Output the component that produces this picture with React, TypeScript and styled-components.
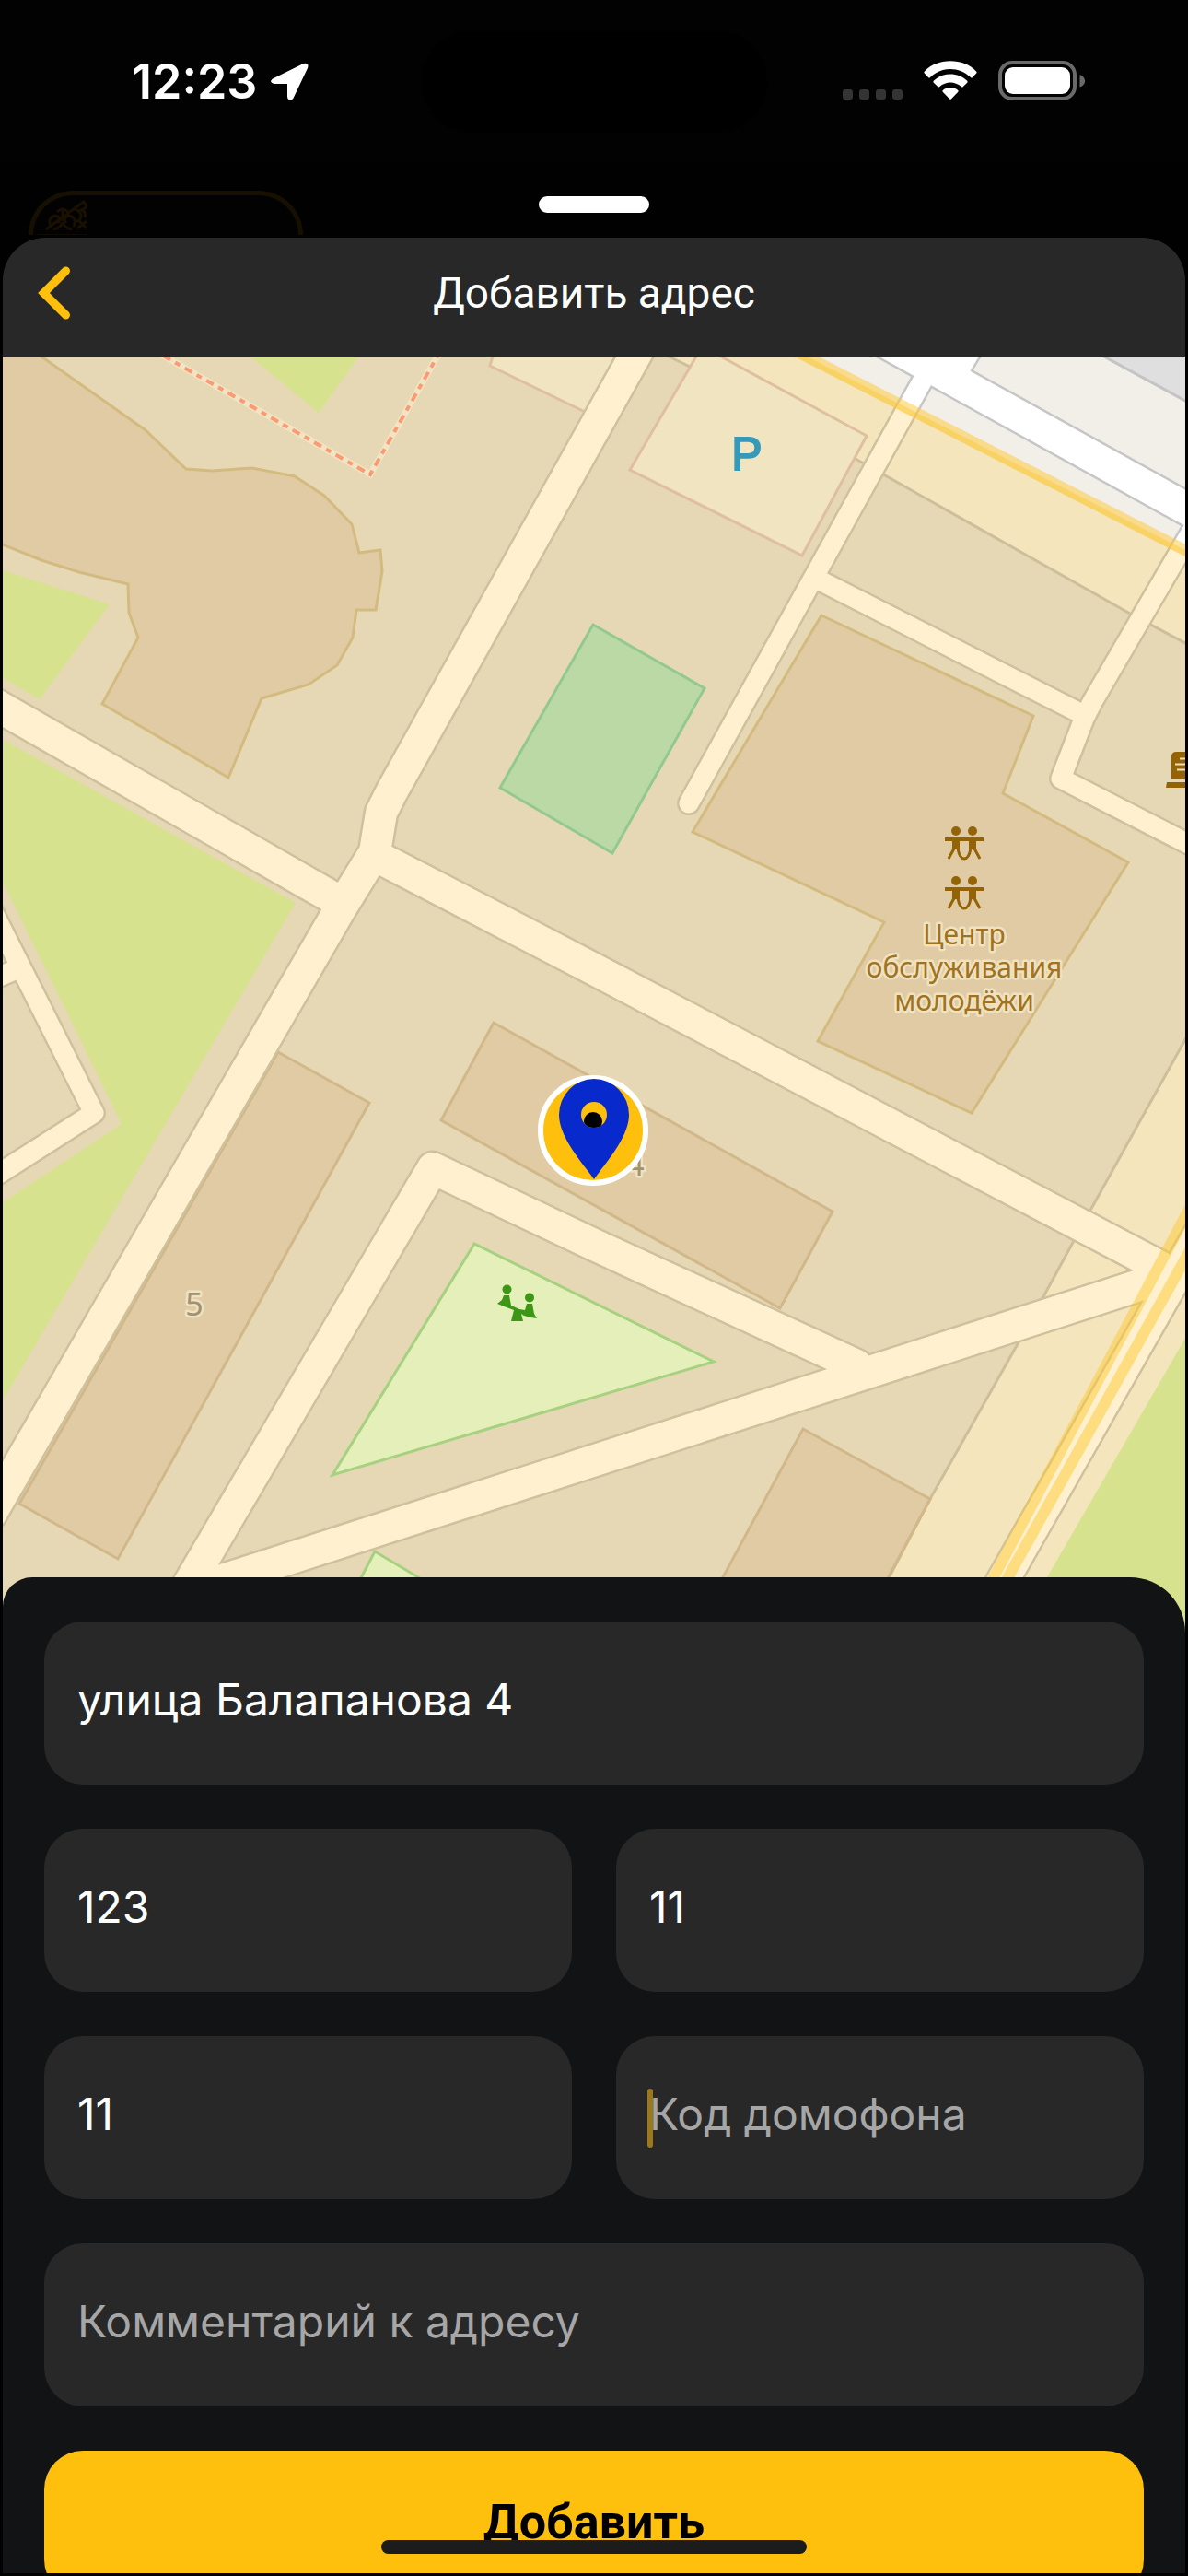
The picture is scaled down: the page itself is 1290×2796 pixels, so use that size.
import React from "react";
import styled, { createGlobalStyle } from "styled-components";

const color = {
  screen: "#020202",
  backdrop: "#000100",
  surface: "#282828",
  panel: "#121315",
  accent: "#ffbf0d",
  text: "#ffffff",
  hint: "#a6a6a6",
};

const uiFont = `Inter, "Noto Sans", sans-serif`;
const titleFont = `Roboto, "Noto Sans", sans-serif`;

const GlobalStyle = createGlobalStyle`
  * { box-sizing: border-box; }
  body { margin: 0; background: #000; }
`;

const Screen = styled.div`
  position: relative;
  display: flex;
  flex-direction: column;
  height: 100vh;
  overflow: hidden;
  background: ${color.backdrop};
  color: ${color.text};
  font-family: ${uiFont};
`;

const StatusBar = styled.header`
  display: grid;
  grid-template-columns: 1fr 376px 1fr;
  align-items: center;
  flex: none;
  height: 177px;
  background: ${color.screen};
`;

const Clock = styled.div`
  display: flex;
  align-items: center;
  gap: 13px;
  padding-left: 143px;
  font-size: 52px;
  line-height: 64px;
  font-weight: 600;
`;

const Island = styled.div`
  height: 111px;
  border-radius: 56px;
  background: #000;
`;

const Indicators = styled.div`
  display: flex;
  align-items: center;
  justify-content: flex-end;
  gap: 23px;
  padding-right: 111px;
  padding-bottom: 2px;

  svg { display: block; }
`;

const Behind = styled.div`
  display: grid;
  grid-template-columns: 1fr auto 1fr;
  align-items: start;
  flex: none;
  height: 81px;
  padding-top: 30px;
`;

const GhostCard = styled.div`
  width: 298px;
  height: 48px;
  margin-left: 31px;
  overflow: hidden;
  border: 5px solid #171002;
  border-bottom: 0;
  border-radius: 56px 56px 0 0;
  background: #020202;
`;

const Handle = styled.div`
  width: 120px;
  height: 18px;
  margin-top: 6px;
  border-radius: 9px;
  background: #fff;
`;

const Sheet = styled.main`
  display: flex;
  flex-direction: column;
  flex: 1;
  min-height: 0;
  margin: 0 3px 3px;
  overflow: hidden;
  border-radius: 46px 46px 0 0;
  background: ${color.surface};
`;

const TitleBar = styled.div`
  display: grid;
  grid-template-columns: 96px 1fr 96px;
  align-items: center;
  flex: none;
  height: 129px;
  padding-bottom: 10px;
`;

const BackButton = styled.button`
  display: flex;
  padding: 0 0 0 36px;
  border: 0;
  background: none;
  cursor: pointer;
`;

const Title = styled.h1`
  margin: 0;
  text-align: center;
  font: 400 46px/60px ${titleFont};
`;

const MapView = styled.div`
  flex: none;
  width: 100%;
  aspect-ratio: 1284 / 1385;

  svg { display: block; width: 100%; height: 100%; }
`;

const Panel = styled.form`
  position: relative;
  display: grid;
  grid-template-columns: 1fr 1fr;
  align-content: start;
  gap: 48px;
  flex: 1;
  min-height: 0;
  margin-top: -60px;
  padding: 48px 45px 0;
  overflow: hidden;
  border-radius: 32px 60px 0 0;
  background: ${color.panel};
`;

const Field = styled.label<{ $wide?: boolean }>`
  position: relative;
  display: block;
  grid-column: ${(p) => (p.$wide ? "1 / -1" : "auto")};
`;

const Input = styled.input`
  display: block;
  width: 100%;
  height: 177px;
  padding: 0 36px 8px;
  border: 0;
  outline: 0;
  border-radius: 42px;
  background: ${color.surface};
  color: ${color.text};
  font: 400 48px/60px ${uiFont};

  &::placeholder { color: ${color.hint}; opacity: 1; }
`;

const Caret = styled.span`
  position: absolute;
  top: 57px;
  left: 34px;
  width: 6px;
  height: 64px;
  border-radius: 3px;
  background: #9d781b;
`;

const Submit = styled.button`
  grid-column: 1 / -1;
  height: 160px;
  padding: 0 0 4px;
  border: 0;
  border-radius: 42px;
  background: ${color.accent};
  color: #000;
  font: 700 52px/60px ${titleFont};
  cursor: pointer;
`;

const HomeIndicator = styled.div`
  position: absolute;
  bottom: 24px;
  left: 50%;
  width: 462px;
  height: 15px;
  margin-left: -231px;
  border-radius: 8px;
  background: #1c1c1c;
`;

const LocationArrow = () => (
  <svg width="44" height="44" viewBox="293 66 44 44" aria-hidden="true">
    <path
      d="M297 84.500 L330.500 68 Q337 66.500 335 73 L319.500 105.500 Q317 109.500 314.500 107 Q313 106 313 103.500 V90 H298.500 Q292.500 88 297 84.500 Z"
      fill="#fff"
    />
  </svg>
);

const SignalDots = () => (
  <svg width="65" height="43" viewBox="916 65 65 43" aria-hidden="true" fill="#343434">
    {[916, 934, 952, 970].map((x) => (
      <rect key={x} x={x} y="96" width="11" height="11" rx="3" />
    ))}
  </svg>
);

const Wifi = () => (
  <svg width="58" height="43" viewBox="1003.500 65 58 43" aria-hidden="true" fill="#fff">
    <path d="M1004.300 78.500 Q1003.300 77.500 1004.500 76.400 C1018 61.500 1047 61.500 1060.500 76.400 Q1061.700 77.500 1060.700 78.500 L1056.500 83 Q1055.500 84 1054.400 83 C1042 71 1023 71 1010.600 83 Q1009.500 84 1008.500 83 Z" />
    <path d="M1014.300 88.700 Q1013.400 87.700 1014.500 86.600 C1024 77 1041 77 1050.500 86.600 Q1051.600 87.700 1050.700 88.700 L1046.300 93 Q1045.300 94 1044.200 93 C1037.500 87 1027.500 87 1020.800 93 Q1019.700 94 1018.700 93 Z" />
    <path d="M1024.200 98.800 Q1023.300 97.800 1024.500 96.800 C1029 93 1036 93 1040.500 96.800 Q1041.700 97.800 1040.800 98.800 L1033.500 106.300 Q1032.500 107.300 1031.500 106.300 Z" />
  </svg>
);

const Battery = () => (
  <svg width="95" height="43" viewBox="1084 65 95 43" aria-hidden="true">
    <rect x="1086" y="67" width="81" height="39" rx="13" fill="none" stroke="#6a6a6a" strokeWidth="4" />
    <rect x="1091" y="72" width="71" height="29" rx="9" fill="#fff" />
    <path d="M1172.500 80 C1180 83 1180 91 1172.500 93.500 Z" fill="#6a6a6a" />
  </svg>
);

const Ornament = () => (
  <svg width="64" height="48" viewBox="36 212 64 48" aria-hidden="true" fill="none" stroke="#1a1002" strokeWidth="3">
    <path d="M50 249 L92 218 M55 246 q-4 -10 5 -12 q8 2 3 8 M80 246 q4 -10 -5 -12 q-8 2 -3 8 M58 249 q9 -2 10 -8 q1 6 10 8 M68 240 V228 M62 230 q6 -6 12 0 M92 220 q4 6 -4 8 q6 2 4 8 M80 226 q8 4 8 8 q0 6 -6 6 M84 248 L94 240 M86 240 L94 248 M40 256 H95" />
  </svg>
);

const BackChevron = () => (
  <svg width="40" height="60" viewBox="39 289 40 60" aria-hidden="true">
    <path d="M71.500 295 L47.500 319 L71.500 343" fill="none" stroke={color.accent} strokeWidth="9" strokeLinecap="round" />
  </svg>
);

const mainRoads = [
  "M700 367 L425 860 L414 882 L407 925 L369 987 L-10 1643",
  "M-10 762 L366 977",
  "M408 929 L645 1052 L1275 1383",
  "M190 1745 L470 1268 L645 1351 L930 1482",
  "M220 1722 L1262 1387",
  "M1070 1749 L1310 1326",
];

const lanes = [
  "M1010 398 L748 872",
  "M892 631 L1171 773",
  "M1310 549 L1186 762 L1177 780 L1152 845 L1310 926",
  "M-20 965 L102 1208 L-20 1286",
  "M-10 1064 L18 1052",
];

const outerRoads = ["M930 354 L1310 564", "M1028 412 L1058 362"];

const Couple = ({ y }: { y: number }) => (
  <g fill="#946306" stroke="#946306">
    <path d={`M1026 ${y + 14} H1068`} strokeWidth="4" />
    {[1038, 1056].map((x) => (
      <g key={x}>
        <circle cx={x} cy={y + 5} r="5" stroke="none" />
        <path d={`M${x - 4} ${y + 14} H${x + 4} V${y + 25} H${x - 4} Z`} stroke="none" />
      </g>
    ))}
    <path
      d={`M1036 ${y + 24} L1030 ${y + 35} M1040 ${y + 24} Q1042 ${y + 35} 1047 ${y + 35} Q1052 ${y + 35} 1054 ${y + 24} M1058 ${y + 24} L1064 ${y + 35}`}
      fill="none"
      strokeWidth="3"
    />
  </g>
);

const halo = {
  stroke: "#efe2c1",
  strokeWidth: 5,
  strokeLinejoin: "round" as const,
  paintOrder: "stroke",
};

const CityMap = () => (
  <svg viewBox="3 387 1284 1385" preserveAspectRatio="xMidYMin slice" role="img" aria-label="Карта">
    <defs>
      <clipPath id="outside">
        <path d="M876 387 L1290 599 V380 H862 Z" />
      </clipPath>
      <clipPath id="pinHole">
        <circle cx="645" cy="1210" r="14" />
      </clipPath>
    </defs>

    <rect x="0" y="380" width="1300" height="1400" fill="#e6d8b4" />

    {/* lighter zones along the boundary */}
    <g fill="#f4e5bc" stroke="#cdbf9b" strokeWidth="3">
      <path d="M712 380 L749 398 L938 503 L1227 666 L1300 705 V380 Z" />
      <path d="M1300 1105 L1186 1310 L1106 1457 L1011 1625 L930 1780 H1300 Z" />
    </g>

    {/* lawns */}
    <g fill="#d6e28e">
      <path d="M266 382 H393 L346 448 Z" />
      <path d="M0 618 L119 656 L43 759 L0 734 Z" />
      <path d="M0 801 L321 980 L0 1525 V1307 L132 1220 L0 951 Z" />
      <path d="M1300 1430 L1137 1712 L1098 1780 H1300 Z" />
    </g>
    <g fill="#e4efb9" stroke="#a6d180" strokeWidth="3">
      <path d="M515 1350 L361 1601 L775 1478 Z" />
      <path d="M407 1684 L375 1745 L510 1745 Z" />
    </g>
    <path d="M644 678 L543 855 L665 926 L765 747 Z" fill="#bbd9a5" stroke="#93c98f" strokeWidth="3" />

    {/* parking lots */}
    <g fill="#f1e4c0" stroke="#dfbf9f" strokeWidth="3">
      <path d="M537 380 L532 397 L635 447 L700 380 Z" />
      <path d="M760 380 L684 510 L871 603 L941 473 L770 380 Z" />
    </g>

    {/* footway */}
    <path d="M172 383 L402 515 L477 383" fill="none" stroke="#f0e4c3" strokeWidth="7" />
    <path d="M172 383 L402 515 L477 383" fill="none" stroke="#fb9a74" strokeWidth="4" strokeDasharray="9 6 6 6" strokeDashoffset="-6" />

    {/* buildings */}
    <g fill="#e0cba4" stroke="#d3bb80" strokeWidth="3">
      <path d="M0 350 L45 387 L158 467 L202 509 L230 511 L274 508 L320 517 L352 538 L382 569 L390 600 L413 597 L415 620 L408 662 L387 662 L383 692 L366 722 L335 743 L284 758 L248 844 L111 764 L150 692 L140 665 L139 634 L86 621 L45 608 L0 590 Z" />
      <path d="M892 668 L1122 777 L1089 861 L1225 936 L1055 1208 L888 1130 L960 1001 L752 903 Z" />
    </g>
    <g fill="#e0cba4" stroke="#d1b88a" strokeWidth="3">
      <path d="M536 1110 L479 1216 L847 1420 L904 1315 Z" />
      <path d="M302 1142 L401 1197 L128 1692 L21 1632 Z" />
      <path d="M872 1551 L1010 1627 L940 1758 H760 Z" />
    </g>

    {/* roads: casings first, then surfaces, so that junctions stay open */}
    <g fill="none" stroke="#cfc19e" strokeLinecap="round" strokeLinejoin="round">
      {mainRoads.map((d) => <path key={d} d={d} strokeWidth="39" />)}
      {lanes.map((d) => <path key={d} d={d} strokeWidth="26" />)}
    </g>
    <g fill="none" stroke="#fff1cf" strokeLinecap="round" strokeLinejoin="round">
      {mainRoads.map((d) => <path key={d} d={d} strokeWidth="34" />)}
      {lanes.map((d) => <path key={d} d={d} strokeWidth="21" />)}
    </g>

    {/* quarter beyond the boundary */}
    <g clipPath="url(#outside)">
      <rect x="850" y="380" width="450" height="230" fill="#f2efe9" />
      <path d="M1186 380 L1300 442 V370 Z" fill="#dfdfdf" stroke="#c4c4c4" strokeWidth="3" />
      <g fill="none" stroke="#c6c6c6">
        {outerRoads.map((d) => <path key={d} d={d} strokeWidth="39" />)}
        <path d={lanes[0]} strokeWidth="26" />
        <path d={lanes[2]} strokeWidth="26" />
      </g>
      <g fill="none" stroke="#fff">
        {outerRoads.map((d) => <path key={d} d={d} strokeWidth="34" />)}
        <path d={lanes[0]} strokeWidth="21" />
        <path d={lanes[2]} strokeWidth="21" />
      </g>
    </g>

    {/* boundary lines */}
    <g fill="none" stroke="#fdc731" strokeOpacity="0.500">
      <path d="M862 380 L1300 604" strokeWidth="12" />
      <path d="M858 381 L1300 607" strokeWidth="6" strokeOpacity="0.250" />
      <path d="M1064 1740 L1310 1277" strokeWidth="12" />
      <path d="M1079 1740 L1310 1325" strokeWidth="12" />
    </g>

    {/* points of interest */}
    <text x="811" y="510" textAnchor="middle" fontFamily="Liberation Sans, sans-serif" fontSize="50" fill="#359ab8" stroke="#359ab8" strokeWidth="2">P</text>
    <Couple y={897} />
    <Couple y={951} />
    <g fontFamily="Noto Sans, sans-serif" fontSize="30" textAnchor="middle" fill="#a1721f" {...halo}>
      <text x="1047" y="1025">Центр</text>
      <text x="1047" y="1061">обслуживания</text>
      <text x="1047" y="1097">молодёжи</text>
    </g>
    <g fontFamily="Noto Sans, sans-serif" fontSize="34" textAnchor="middle" fill="#a39271" {...halo}>
      <text x="211" y="1428">5</text>
      <text x="690" y="1276">4</text>
    </g>
    <g fill="#3c9714">
      <circle cx="550.500" cy="1399.500" r="5" />
      <circle cx="575" cy="1408.500" r="5" />
      <path d="M547 1406 H553 L555 1417 L564 1421 L570 1422 L572 1415 H578 L580 1426 L583 1431 L576 1430 L569 1428 L566 1426 L568 1434 H555 L558 1422 L550 1419 L540 1415 L545 1411 Z" />
    </g>
    <g fill="#946306">
      <path d="M1272 846 V820 Q1273 816 1277 816 H1290 V846 Z" />
      <path d="M1267 849 H1290 V855 H1266 Z" />
      <path d="M1281 823.500 H1290 M1276 829.500 H1290 M1278 835.500 H1290" stroke="#f0e0bd" strokeWidth="2" />
    </g>

    {/* selected address */}
    <circle cx="644" cy="1227" r="57" fill={color.accent} stroke="#fff" strokeWidth="6" />
    <path d="M645 1280 C634 1264 607 1235 607 1210 A38 39 0 0 1 683 1210 C683 1235 656 1264 645 1280 Z" fill="#0829cb" />
    <circle cx="645" cy="1210" r="14" fill={color.accent} />
    <circle cx="644" cy="1217" r="10" fill="#000" clipPath="url(#pinHole)" />
  </svg>
);

interface FieldSpec {
  name: string;
  label: string;
  value?: string;
  wide?: boolean;
  active?: boolean;
}

const fields: FieldSpec[] = [
  { name: "street", label: "Адрес", value: "улица Балапанова 4", wide: true },
  { name: "flat", label: "Квартира", value: "123" },
  { name: "entrance", label: "Подъезд", value: "11" },
  { name: "floor", label: "Этаж", value: "11" },
  { name: "intercom", label: "Код домофона", active: true },
  { name: "comment", label: "Комментарий к адресу", wide: true },
];

export default function App() {
  return (
    <>
      <GlobalStyle />
      <Screen>
        <StatusBar>
          <Clock>
            12:23
            <LocationArrow />
          </Clock>
          <Island />
          <Indicators>
            <SignalDots />
            <Wifi />
            <Battery />
          </Indicators>
        </StatusBar>

        <Behind>
          <GhostCard>
            <Ornament />
          </GhostCard>
          <Handle />
        </Behind>

        <Sheet>
          <TitleBar>
            <BackButton type="button" aria-label="Назад">
              <BackChevron />
            </BackButton>
            <Title>Добавить адрес</Title>
          </TitleBar>

          <MapView>
            <CityMap />
          </MapView>

          <Panel onSubmit={(e: React.FormEvent) => e.preventDefault()}>
            {fields.map((f) => (
              <Field key={f.name} $wide={f.wide}>
                <Input name={f.name} aria-label={f.label} placeholder={f.label} defaultValue={f.value} />
                {f.active && <Caret />}
              </Field>
            ))}
            <Submit type="submit">Добавить</Submit>
          </Panel>
        </Sheet>
        <HomeIndicator />
      </Screen>
    </>
  );
}
